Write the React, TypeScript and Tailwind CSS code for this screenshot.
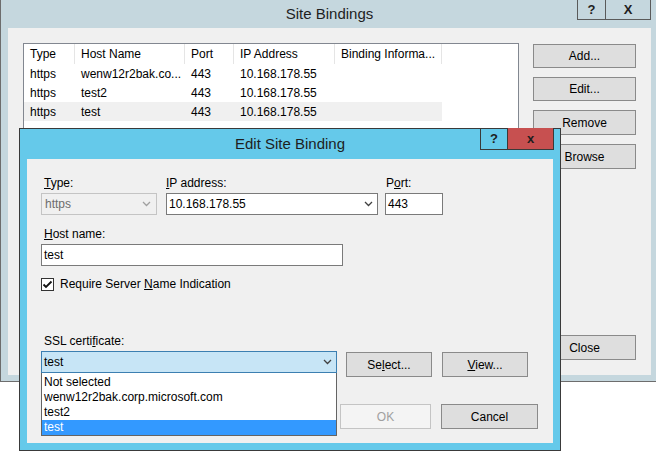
import React from 'react';

const font = "font-['Liberation_Sans',Arial,sans-serif]";

const Chevron = ({ color = '#404040' }: { color?: string }) => (
  <svg width="9" height="6" viewBox="0 0 9 6" className="shrink-0">
    <path d="M1 1 L4.5 4.5 L8 1" fill="none" stroke={color} strokeWidth="1.3" />
  </svg>
);

const Btn: React.FC<{ children: React.ReactNode; className?: string }> = ({ children, className = '' }) => (
  <div className={`flex items-center justify-center border border-[#8a8a8a] bg-[#dedede] text-black ${className}`}>
    {children}
  </div>
);

const cols = [
  { label: 'Type', w: 51 },
  { label: 'Host Name', w: 110 },
  { label: 'Port', w: 49 },
  { label: 'IP Address', w: 101 },
  { label: 'Binding Informa...', w: 107 },
];

const rows = [
  ['https', 'wenw12r2bak.co...', '443', '10.168.178.55', ''],
  ['https', 'test2', '443', '10.168.178.55', ''],
  ['https', 'test', '443', '10.168.178.55', ''],
];

const certs = ['Not selected', 'wenw12r2bak.corp.microsoft.com', 'test2', 'test'];

const SiteBindings = () => (
  <div className="absolute left-0 top-0 w-[659px] h-[382px] border-x border-b border-[#6d6d6d] bg-[#c5d7de] flex flex-col">
    <div className="relative h-[28px] flex items-center justify-center text-[15px] text-[#1e1e1e]">
      Site Bindings
      <div className="absolute right-[7px] top-0 flex h-[20px] border-x border-b border-[#5a5a5a] text-[13px] font-bold">
        <div className="w-[28px] flex items-center justify-center border-r border-[#5a5a5a]">?</div>
        <div className="w-[44px] flex items-center justify-center">X</div>
      </div>
    </div>
    <div className="mx-[7px] h-[347px] bg-[#f0f0f0] flex gap-[14px] p-[15px]">
      <div className="flex-1 border border-[#828790] bg-white">
        <div className="flex h-[20px]">
          {cols.map((c) => (
            <div key={c.label} style={{ width: c.w }} className="border-r border-[#e5e5e5] pl-[6px] flex items-center">
              {c.label}
            </div>
          ))}
        </div>
        {rows.map((r, i) => (
          <div key={i} className={`flex h-[19px] w-[418px] ${i === 2 ? 'bg-[#f0f0f0]' : ''}`}>
            {r.map((cell, j) => (
              <div key={j} style={{ width: cols[j].w }} className="pl-[6px] flex items-center whitespace-nowrap">
                {cell}
              </div>
            ))}
          </div>
        ))}
      </div>
      <div className="w-[103px] flex flex-col gap-[9px] pt-px">
        <Btn className="h-[24px]">Add...</Btn>
        <Btn className="h-[24px]">Edit...</Btn>
        <Btn className="h-[25px]">Remove</Btn>
        <Btn className="h-[25px]">Browse</Btn>
        <Btn className="h-[25px] mt-auto">Close</Btn>
      </div>
    </div>
  </div>
);

const Label: React.FC<{ children: React.ReactNode; className?: string }> = ({ children, className = '' }) => (
  <div className={`h-[15px] leading-[15px] mb-[2px] ${className}`}>{children}</div>
);

const EditBinding = () => (
  <div className="absolute left-[19px] top-[128px] w-[542px] h-[323px] border border-[#3a3a3a] bg-[#65c9ea] flex flex-col">
    <div className="relative h-[30px] flex items-center justify-center text-[15px] text-[#1e1e1e]">
      Edit Site Binding
      <div className="absolute right-[6px] -top-px flex h-[22px] border-x border-b border-[#3a3a3a] text-[13px] font-bold">
        <div className="w-[27px] flex items-center justify-center border-r border-[#3a3a3a]">?</div>
        <div className="w-[45px] flex items-center justify-center bg-[#c75050]">x</div>
      </div>
    </div>
    <div className="mx-[7px] h-[284px] bg-[#f0f0f0] pl-[14px] pt-[17px] flex flex-col">
      <div className="flex items-start">
        <div className="w-[116px] flex flex-col">
          <Label className="pl-[3px]">
            <span className="underline">T</span>ype:
          </Label>
          <div className="h-[22px] border border-[#c4c4c4] bg-[#f0f0f0] flex items-center justify-between pl-[3px] pr-[5px] text-[#6d6d6d]">
            https
            <Chevron color="#a0a0a0" />
          </div>
        </div>
        <div className="w-[212px] ml-[9px] flex flex-col">
          <Label>
            <span className="underline">I</span>P address:
          </Label>
          <div className="h-[22px] border border-[#7a7a7a] bg-white flex items-center justify-between pl-[2px] pr-[4px]">
            10.168.178.55
            <Chevron />
          </div>
        </div>
        <div className="w-[58px] ml-[7px] flex flex-col">
          <Label className="pl-px">
            P<span className="underline">o</span>rt:
          </Label>
          <div className="h-[22px] border border-[#7a7a7a] bg-white flex items-center pl-[2px]">443</div>
        </div>
      </div>

      <div className="mt-[12px] flex flex-col w-[302px]">
        <Label className="pl-[3px]">
          <span className="underline">H</span>ost name:
        </Label>
        <div className="h-[22px] border border-[#7a7a7a] bg-white flex items-center pl-[2px]">test</div>
      </div>

      <div className="mt-[12px] flex items-center h-[13px]">
        <div className="w-[13px] h-[13px] border border-[#333333] bg-white flex items-center justify-center">
          <svg width="11" height="11" viewBox="0 0 11 11">
            <path d="M1.5 5.5 L4 8 L9.5 2.5" fill="none" stroke="#111" strokeWidth="1.8" />
          </svg>
        </div>
        <span className="ml-[6px] -mt-px">
          Require Server <span className="underline">N</span>ame Indication
        </span>
      </div>

      <div className="mt-[43px]">
        <Label className="pl-[3px]">
          SSL certi<span className="underline">f</span>icate:
        </Label>
        <div className="flex items-start">
          <div className="relative w-[296px]">
            <div className="h-[22px] border border-[#3c7fb1] bg-[#c7e5f6] flex items-center justify-between pl-[2px] pr-[4px]">
              test
              <Chevron />
            </div>
            <div className="absolute left-0 top-full w-full z-10 bg-white border-x border-b border-[#646464] pt-[2px]">
              {certs.map((c, i) => (
                <div
                  key={c}
                  className={`leading-[15px] pl-[2px] ${i === 3 ? 'h-[15px] bg-[#3399ff] text-white' : 'h-[15px] text-black'}`}
                >
                  {c}
                </div>
              ))}
            </div>
          </div>
          <Btn className="w-[86px] h-[25px] ml-[9px] mt-px">
            <span>
              Se<span className="underline">l</span>ect...
            </span>
          </Btn>
          <Btn className="w-[86px] h-[25px] ml-[10px] mt-px">
            <span>
              <span className="underline">V</span>iew...
            </span>
          </Btn>
        </div>
      </div>

      <div className="mt-[27px] flex justify-end gap-[10px] pr-[15px]">
        <div className="w-[91px] h-[25px] border border-[#c4c4c4] bg-[#f4f4f4] text-[#a0a0a0] flex items-center justify-center">
          OK
        </div>
        <Btn className="w-[97px] h-[25px]">Cancel</Btn>
      </div>
    </div>
  </div>
);

export default function App() {
  return (
    <div className={`relative w-[656px] h-[451px] overflow-hidden bg-white text-[12px] text-black ${font}`}>
      <SiteBindings />
      <EditBinding />
    </div>
  );
}
